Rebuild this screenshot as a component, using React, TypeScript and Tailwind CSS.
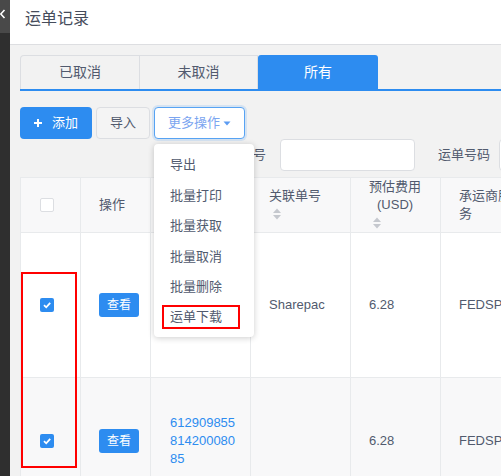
import React from "react";

const MENU = ["导出", "批量打印", "批量获取", "批量取消", "批量删除", "运单下载"];

function SortIcon() {
  return (
    <svg width="8" height="12" viewBox="0 0 8 12" className="block">
      <path d="M0 5 L4 0.5 L8 5 Z" fill="#c5c8ce" />
      <path d="M0 7 L8 7 L4 11.5 Z" fill="#c5c8ce" />
    </svg>
  );
}

function Checkbox({ checked }: { checked?: boolean }) {
  if (!checked) {
    return <span className="block h-[14px] w-[14px] rounded-[2px] border border-[#dcdee2] bg-white" />;
  }
  return (
    <span className="flex h-[14px] w-[14px] items-center justify-center rounded-[2px] bg-[#2d8cf0]">
      <svg width="10" height="10" viewBox="0 0 10 10">
        <path d="M2 5.2 L4.2 7.3 L8.2 2.8" fill="none" stroke="white" strokeWidth="1.8" />
      </svg>
    </span>
  );
}

function ViewButton() {
  return (
    <button className="flex h-[24px] w-[40px] items-center justify-center rounded-[3px] bg-[#2d8cf0] text-[12px] text-white">
      查看
    </button>
  );
}

export default function App() {
  return (
    <div className="relative flex h-[476px] w-[501px] overflow-hidden bg-[#f2f2f2] font-[family-name:Liberation_Sans,Noto_Sans_CJK_SC,sans-serif] text-[13px] text-[#515a6e]">
      {/* sidebar edge */}
      <aside className="flex w-[10px] shrink-0 flex-col bg-[#2f2f2f]">
        <div className="h-[33px] overflow-hidden bg-[#494949]">
          <svg width="10" height="33" viewBox="0 0 10 33">
            <path d="M4.5 10 L0.8 14 L4.5 18" fill="none" stroke="white" strokeWidth="1.6" />
          </svg>
        </div>
      </aside>

      <main className="min-w-0 flex-1">
        <header className="flex h-[45px] items-center border-b border-[#dddee1] bg-white pb-[6px] pl-[15px] text-[16px] text-[#464c5b]">
          运单记录
        </header>

        <div className="pl-[10px] pt-[10px]">
          {/* tabs */}
          <div className="flex h-[36px] border-b-2 border-[#2d8cf0] text-[14px]">
            <div className="flex w-[120px] items-center justify-center rounded-tl-[4px] border border-b-0 border-[#dcdee2]">
              已取消
            </div>
            <div className="flex w-[118px] items-center justify-center border-t border-r border-[#dcdee2]">
              未取消
            </div>
            <div className="flex w-[120px] items-center justify-center rounded-t-[3px] bg-[#2d8cf0] text-white">
              所有
            </div>
          </div>

          {/* action buttons */}
          <div className="mt-4 flex h-8 gap-1">
            <button className="flex w-[72px] items-center justify-center gap-[10px] rounded-[4px] bg-[#2d8cf0] text-white">
              <svg width="8" height="8" viewBox="0 0 8 8">
                <path d="M4 0 V8 M0 4 H8" stroke="white" strokeWidth="2" />
              </svg>
              添加
            </button>
            <button className="w-[54px] rounded-[4px] border border-[#dcdee2] bg-[#f4f4f4]">导入</button>
            <div className="relative z-10">
              <button className="flex h-8 w-[91px] items-center justify-center gap-[3px] rounded-[4px] border border-[#57a3f3] bg-white text-[#7ba5f0] shadow-[0_0_0_2px_rgba(45,140,240,0.15)]">
                更多操作
                <svg width="8" height="5" viewBox="0 0 8 5">
                  <path d="M0.5 0.5 L7.5 0.5 L4 4.5 Z" fill="#5c9cf2" />
                </svg>
              </button>
              <ul className="absolute left-0 top-[37px] w-[100px] rounded-[4px] bg-white pb-[5px] pt-[6px] shadow-[0_1px_6px_rgba(0,0,0,0.2)]">
                {MENU.map((m, i) => (
                  <li key={m} className="relative flex h-[30.4px] items-center pl-4">
                    {m}
                    {i === MENU.length - 1 && (
                      <span className="absolute left-[8px] top-[3px] h-[24px] w-[78px] border-2 border-[#ff0000]" />
                    )}
                  </li>
                ))}
              </ul>
            </div>
          </div>

          {/* filter row */}
          <div className="flex h-8 items-center pl-[194px]">
            <span className="whitespace-nowrap">跟踪单号</span>
            <input className="ml-[14px] h-8 w-[135px] shrink-0 rounded-[4px] border border-[#dcdee2] bg-white" />
            <span className="ml-[23px] whitespace-nowrap">运单号码</span>
            <input className="ml-[9px] h-8 w-[135px] shrink-0 rounded-[4px] border border-[#dcdee2] bg-white" />
          </div>

          {/* table */}
          <table className="mt-[6px] w-[618px] table-fixed border-separate border-spacing-0 border-l border-t border-[#e8eaec] leading-[18px]">
            <colgroup>
              <col className="w-[60px]" />
              <col className="w-[70px]" />
              <col className="w-[100px]" />
              <col className="w-[100px]" />
              <col className="w-[90px]" />
              <col className="w-[98px]" />
              <col className="w-[100px]" />
            </colgroup>
            <thead>
              <tr className="h-[55px] bg-[#f8f8f9] text-left">
                <th className="border-b border-r border-[#e8eaec] pl-[19px] font-normal">
                  <Checkbox />
                </th>
                <th className="border-b border-r border-[#e8eaec] pl-[18px] font-normal">操作</th>
                <th className="border-b border-r border-[#e8eaec] pl-[18px] font-normal">跟踪单号</th>
                <th className="border-b border-r border-[#e8eaec] pl-[18px] font-normal">
                  <div>关联单号</div>
                  <div className="flex h-[18px] items-center pl-1">
                    <SortIcon />
                  </div>
                </th>
                <th className="border-b border-r border-[#e8eaec] pl-[18px] font-normal">
                  <div>预估费用</div>
                  <div className="pl-2">(USD)</div>
                  <div className="flex h-[18px] items-center pl-1">
                    <SortIcon />
                  </div>
                </th>
                <th className="border-b border-r border-[#e8eaec] pl-[18px] pr-[18px] font-normal">承运商服务</th>
                <th className="border-b border-r border-[#e8eaec] pl-[18px] font-normal">状态</th>
              </tr>
            </thead>
            <tbody>
              <tr className="h-[145px] bg-white">
                <td className="border-b border-r border-[#e8eaec] pl-[19px]">
                  <Checkbox checked />
                </td>
                <td className="border-b border-r border-[#e8eaec] pl-[18px]">
                  <ViewButton />
                </td>
                <td className="break-all border-b border-r border-[#e8eaec] pl-[19px] pr-[12px] text-[#2d8cf0]">
                  61290985581420008079
                </td>
                <td className="border-b border-r border-[#e8eaec] pl-[18px]">Sharepac</td>
                <td className="border-b border-r border-[#e8eaec] pl-[18px]">6.28</td>
                <td className="border-b border-r border-[#e8eaec] pl-[18px]">FEDSP</td>
                <td className="border-b border-r border-[#e8eaec] pl-[18px]">已下单</td>
              </tr>
              <tr className="h-[126px] bg-[#f8f8f9]">
                <td className="border-b border-r border-[#e8eaec] pl-[19px]">
                  <Checkbox checked />
                </td>
                <td className="border-b border-r border-[#e8eaec] pl-[18px]">
                  <ViewButton />
                </td>
                <td className="break-all border-b border-r border-[#e8eaec] pl-[19px] pr-[12px] text-[#2d8cf0]">
                  61290985581420008085
                </td>
                <td className="border-b border-r border-[#e8eaec] pl-[18px]" />
                <td className="border-b border-r border-[#e8eaec] pl-[18px]">6.28</td>
                <td className="border-b border-r border-[#e8eaec] pl-[18px]">FEDSP</td>
                <td className="border-b border-r border-[#e8eaec] pl-[18px]">已下单</td>
              </tr>
            </tbody>
          </table>
        </div>
      </main>

      {/* annotation around the checked rows */}
      <span className="pointer-events-none absolute left-[21px] top-[272px] h-[196px] w-[56px] border-2 border-[#ff0000]" />
    </div>
  );
}
